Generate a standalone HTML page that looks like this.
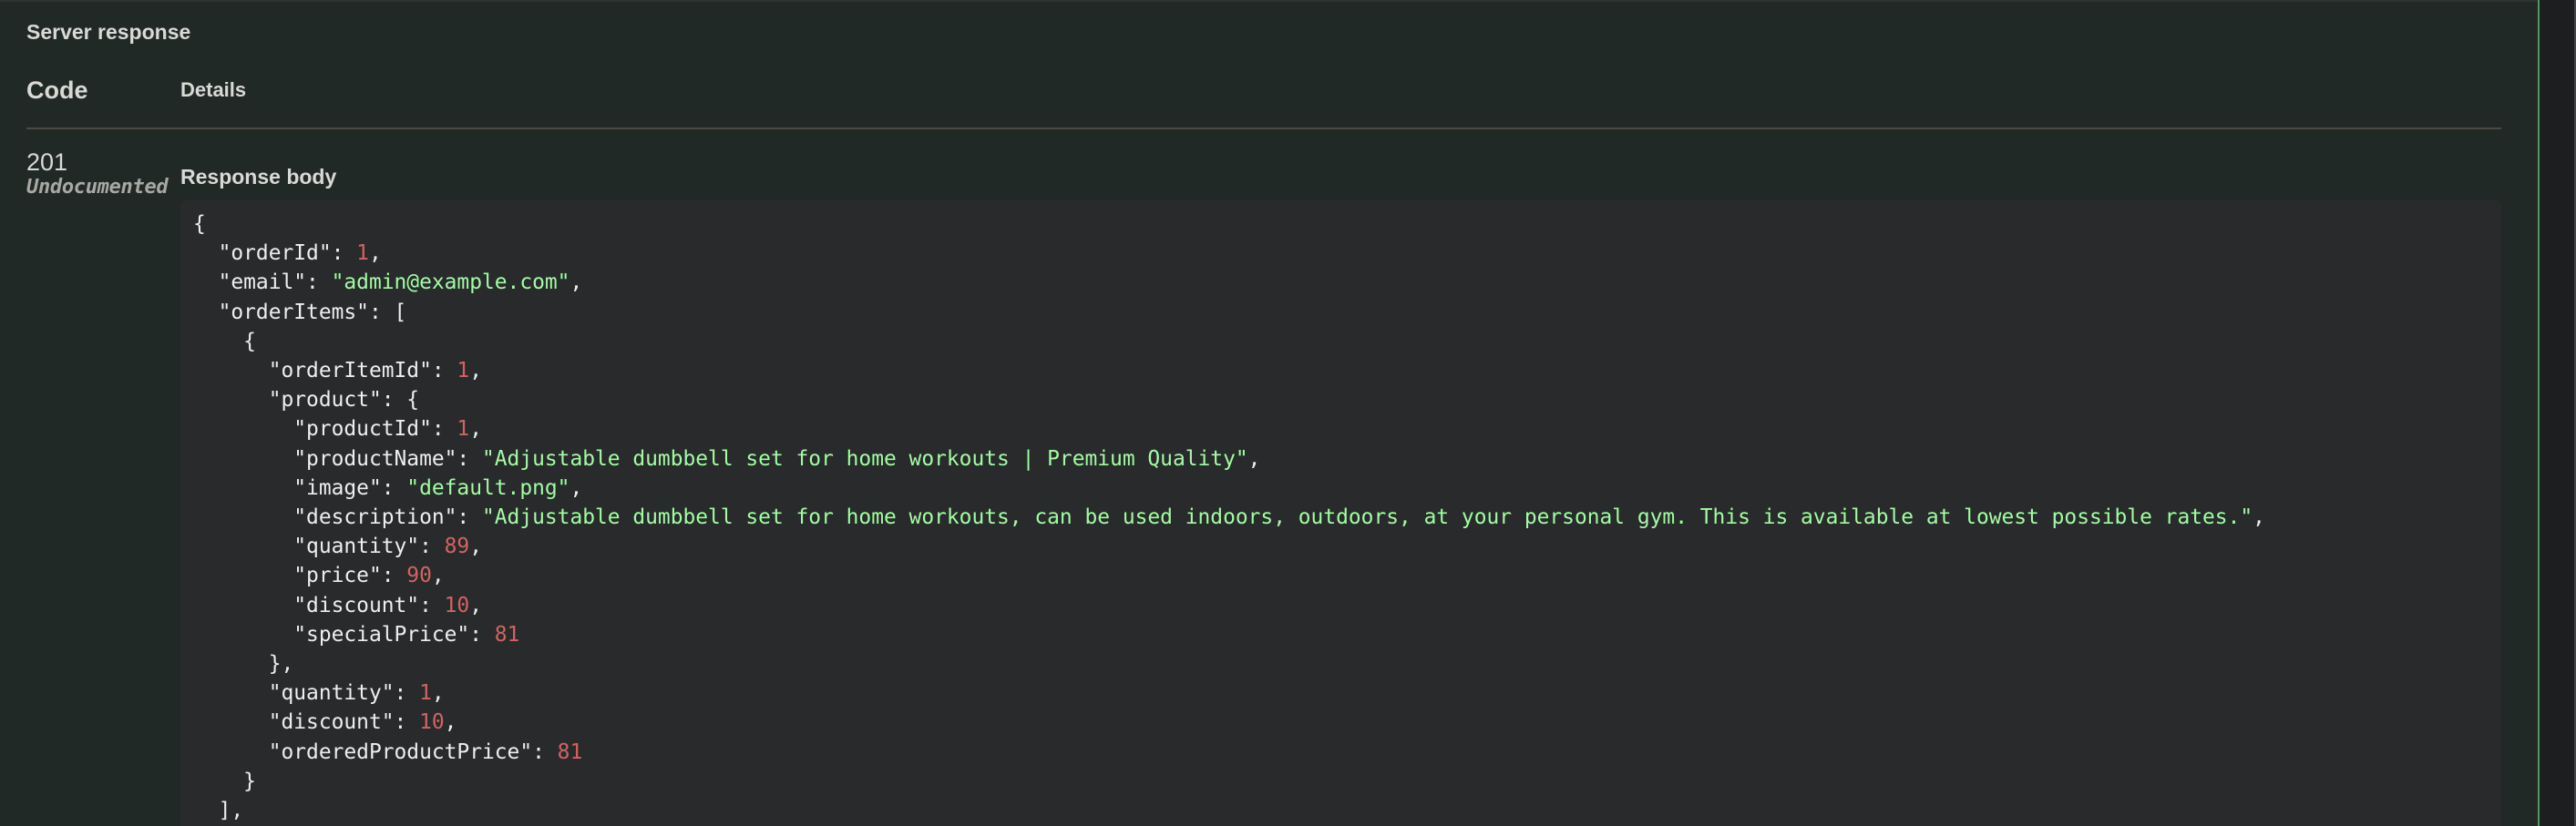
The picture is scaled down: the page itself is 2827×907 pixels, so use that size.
<!DOCTYPE html>
<html><head><meta charset="utf-8">
<style>
html,body{margin:0;padding:0;overflow:hidden;}
body{width:2827px;height:907px;overflow:hidden;background:#1c1e1f;position:relative;font-family:"Liberation Sans",sans-serif;}
.main{position:absolute;left:0;top:0;width:2785px;height:907px;background:#212927;}
.gb{position:absolute;left:2785px;top:0;width:2px;height:907px;background:#4d9a5e;}
.rl{position:absolute;left:2825px;top:0;width:2px;height:907px;background:#444;}
.tl{position:absolute;left:0;top:0;width:2785px;height:2px;background:#2c3331;}
.t{position:absolute;color:#d9d9d6;white-space:nowrap;}
.hr{position:absolute;left:29px;top:140px;width:2716px;height:2px;background:#4a4a44;}
.box{position:absolute;left:198px;top:220px;width:2547px;height:687px;background:#282a2b;border-radius:6px 6px 0 0;}
pre{position:absolute;left:212px;top:230px;margin:0;font-family:"DejaVu Sans Mono","Liberation Mono",monospace;font-size:22.9px;line-height:32.2px;color:#eeeeee;}
.n{color:#d36363}.s{color:#a2fca2}
</style></head><body>
<div class="main"></div><div class="tl"></div><div class="gb"></div><div class="rl"></div>
<div class="t" style="left:29px;top:22px;font-size:23px;font-weight:bold;">Server response</div>
<div class="t" style="left:29px;top:84px;font-size:27px;font-weight:bold;">Code</div>
<div class="t" style="left:198px;top:86px;font-size:22px;font-weight:bold;">Details</div>
<div class="hr"></div>
<div class="t" style="left:29px;top:163px;font-size:27px;">201</div>
<div class="t" style="left:29px;top:193px;font-size:22px;font-style:italic;font-weight:bold;color:#a8a8a4;font-family:'DejaVu Sans Mono','Liberation Mono',monospace;letter-spacing:-0.3px;">Undocumented</div>
<div class="t" style="left:198px;top:181px;font-size:23px;font-weight:bold;">Response body</div>
<div class="box"></div>
<pre>{
  "orderId": <span class="n">1</span>,
  "email": <span class="s">"admin@example.com"</span>,
  "orderItems": [
    {
      "orderItemId": <span class="n">1</span>,
      "product": {
        "productId": <span class="n">1</span>,
        "productName": <span class="s">"Adjustable dumbbell set for home workouts | Premium Quality"</span>,
        "image": <span class="s">"default.png"</span>,
        "description": <span class="s">"Adjustable dumbbell set for home workouts, can be used indoors, outdoors, at your personal gym. This is available at lowest possible rates."</span>,
        "quantity": <span class="n">89</span>,
        "price": <span class="n">90</span>,
        "discount": <span class="n">10</span>,
        "specialPrice": <span class="n">81</span>
      },
      "quantity": <span class="n">1</span>,
      "discount": <span class="n">10</span>,
      "orderedProductPrice": <span class="n">81</span>
    }
  ],
</pre>
</body></html>
